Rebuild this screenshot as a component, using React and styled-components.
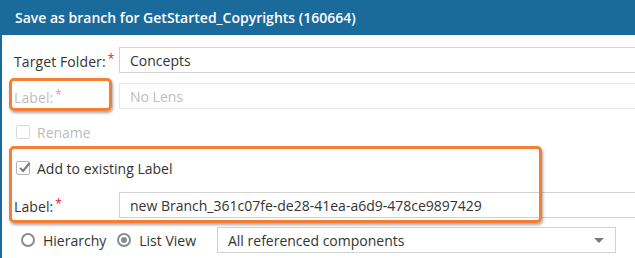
import React from 'react'
import styled, { createGlobalStyle } from 'styled-components'

const Global = createGlobalStyle`
  html, body { margin: 0; padding: 0; background: #fff; }
  body { font-family: "Open Sans", "Noto Sans", sans-serif; overflow: hidden; }
`;

const Dialog = styled.div`
  width: 635px;
  height: 258px;
  box-sizing: border-box;
  border-left: 2px solid #1b6a9c;
  overflow: hidden;
  background: #fff;
`;

const Header = styled.div`
  height: 35px;
  background: #1b6a9c;
  color: #fff;
  font-size: 14px;
  font-weight: 600;
  display: flex;
  align-items: center;
  padding-left: 15px;
  margin-left: -2px;
`;

const Body = styled.div`
  padding: 12px 0 0 12px;
  display: flex;
  flex-direction: column;
`;

const Row = styled.div`
  position: relative;
  display: flex;
  align-items: center;
  height: ${p => p.$h || 26}px;
  margin-top: ${p => p.$mt || 0}px;
`;

const Label = styled.div`
  position: relative;
  width: 105px;
  flex: none;
  font-size: 14px;
  letter-spacing: 0.1px;
  color: ${p => (p.$disabled ? '#bdbdbd' : '#333')};
`;

const Star = styled.span`
  color: ${p => (p.$disabled ? '#f590a8' : '#e3132f')};
  font-size: 12px;
  vertical-align: 4px;
  margin-left: 2px;
`;

const Input = styled.div`
  flex: 1;
  height: 26px;
  box-sizing: border-box;
  border: 1px solid ${p => (p.$disabled ? '#e8e8e8' : '#d2d2d2')};
  border-right: none;
  padding-left: 10px;
  display: flex;
  align-items: center;
  font-size: 14px;
  color: ${p => (p.$disabled ? '#bdbdbd' : '#333')};
`;

const Check = styled.label`
  display: flex;
  align-items: center;
  gap: 7px;
  font-size: 14px;
  color: ${p => (p.$disabled ? '#bdbdbd' : '#333')};
`;

const Box = styled.span`
  position: relative;
  width: 14px;
  height: 14px;
  box-sizing: border-box;
  border: 1px solid ${p => (p.$disabled ? '#dadada' : '#b5b5b5')};
  border-radius: 2px;
  margin-left: 2px;
  svg { position: absolute; left: 1px; top: -1px; display: block; }
`;

const Group = styled.div`
  position: relative;
  display: flex;
  flex-direction: column;
  margin-top: 16px;
`;

const Highlight = styled.div`
  position: absolute;
  top: ${p => p.$t}px;
  left: ${p => p.$l}px;
  width: ${p => p.$w}px;
  height: ${p => p.$hh}px;
  box-sizing: border-box;
  border: 3px solid #f47f34;
  border-radius: 5px;
  box-shadow: 1px 2px 3px rgba(0, 0, 0, 0.35);
  pointer-events: none;
`;

const Radio = styled.span`
  width: 14px;
  height: 14px;
  box-sizing: border-box;
  border: 2px solid #878b92;
  border-radius: 50%;
  display: inline-flex;
  align-items: center;
  justify-content: center;
  &::after {
    content: '';
    width: 6px;
    height: 6px;
    border-radius: 50%;
    background: ${p => (p.$on ? '#878b92' : 'transparent')};
  }
`;

const RadioLabel = styled.label`
  display: flex;
  align-items: center;
  gap: 8px;
  font-size: 14px;
  color: #333;
  margin-left: ${p => p.$ml || 0}px;
`;

const Select = styled.div`
  width: 399px;
  height: 26px;
  box-sizing: border-box;
  border: 1px solid #d2d2d2;
  margin-left: 21px;
  display: flex;
  align-items: center;
  justify-content: space-between;
  padding: 0 11px 0 10px;
  font-size: 14px;
  color: #333;
`;

const Caret = styled.span`
  width: 0;
  height: 0;
  border-left: 5px solid transparent;
  border-right: 5px solid transparent;
  border-top: 5px solid #7a7a7a;
`;

function Tick() {
  return (
    <svg width="13" height="13" viewBox="0 0 13 13">
      <path d="M2 7 L5.2 10 L11.5 2" fill="none" stroke="#7d7d7d" strokeWidth="2.2" />
    </svg>
  );
}

export default function App() {
  return (
    <Dialog>
      <Global />
      <Header>Save as branch for GetStarted_Copyrights (160664)</Header>
      <Body>
        <Row>
          <Label>Target Folder:<Star>*</Star></Label>
          <Input>Concepts</Input>
        </Row>
        <Row $mt={10}>
          <Label $disabled>
            Label:<Star $disabled>*</Star>
          </Label>
          <Input $disabled>No Lens</Input>
          <Highlight $t={-5} $l={-5} $w={103} $hh={33} />
        </Row>
        <Row $h={20} $mt={13}>
          <Check $disabled>
            <Box $disabled />
            Rename
          </Check>
        </Row>
        <Group>
          <Row $h={20}>
            <Check>
              <Box><Tick /></Box>
              Add to existing Label
            </Check>
          </Row>
          <Row $mt={14}>
            <Label>Label:<Star>*</Star></Label>
            <Input>new Branch_361c07fe-de28-41ea-a6d9-478ce9897429</Input>
          </Row>
          <Highlight $t={-12} $l={-5} $w={533} $hh={77} />
        </Group>
        <Row $mt={9}>
          <RadioLabel $ml={7}>
            <Radio />
            Hierarchy
          </RadioLabel>
          <RadioLabel $ml={11}>
            <Radio $on />
            List View
          </RadioLabel>
          <Select>
            All referenced components
            <Caret />
          </Select>
        </Row>
      </Body>
    </Dialog>
  );
}
